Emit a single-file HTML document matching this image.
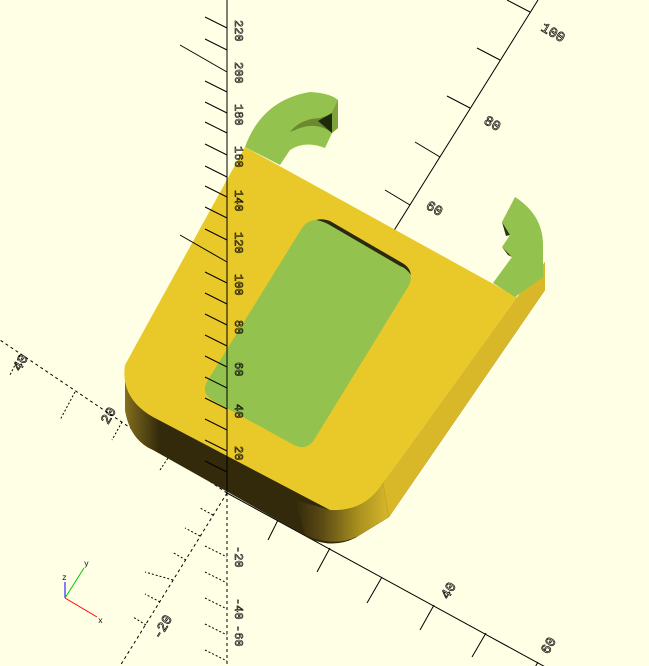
<!DOCTYPE html>
<html><head><style>
html,body{margin:0;padding:0;background:#ffffe5;}
svg{display:block;}
text{font-family:"Liberation Mono",monospace;}
</style></head><body>
<svg width="649" height="666" viewBox="0 0 649 666" xmlns="http://www.w3.org/2000/svg">
<defs>
<linearGradient id="fr" x1="295" y1="0" x2="385" y2="0" gradientUnits="userSpaceOnUse">
<stop offset="0" stop-color="#33290b"/><stop offset="0.3" stop-color="#5a4a14"/><stop offset="0.7" stop-color="#a8901f"/><stop offset="1" stop-color="#d2b22a"/>
</linearGradient>
<linearGradient id="fl" x1="122" y1="0" x2="160" y2="0" gradientUnits="userSpaceOnUse">
<stop offset="0" stop-color="#8a7420"/><stop offset="1" stop-color="#33290b"/>
</linearGradient>
</defs>
<rect width="649" height="666" fill="#ffffe5"/>
<g stroke="#000" stroke-width="1" fill="none">
<line x1="227" y1="493" x2="0" y2="340" stroke-dasharray="3,3"/>
<line x1="227" y1="493" x2="120" y2="666" stroke-dasharray="3,3"/>
<line x1="227" y1="493" x2="227" y2="666" stroke-dasharray="3,3"/>
<line x1="227" y1="493" x2="560" y2="675"/>
<line x1="230" y1="493" x2="538" y2="0"/>
<line x1="278" y1="520" x2="268" y2="540"/><line x1="330" y1="548" x2="317" y2="572"/>
<line x1="382" y1="577" x2="367" y2="603"/><line x1="434" y1="605" x2="420" y2="630"/>
<line x1="486" y1="633" x2="472" y2="657"/><line x1="538" y1="662" x2="528" y2="680"/>
<line x1="410" y1="205" x2="385" y2="190"/><line x1="440" y1="157" x2="415" y2="142"/>
<line x1="470" y1="108" x2="447" y2="96"/><line x1="500" y1="60" x2="477" y2="48"/>
<line x1="530" y1="12" x2="507" y2="0"/>
<g stroke-dasharray="2,2">
<line x1="170" y1="455" x2="160" y2="470"/><line x1="122" y1="422" x2="112" y2="440"/>
<line x1="75" y1="392" x2="60" y2="420"/><line x1="20" y1="355" x2="10" y2="375"/>
<line x1="213" y1="515" x2="200" y2="508"/><line x1="200" y1="536" x2="185" y2="528"/>
<line x1="186" y1="560" x2="172" y2="552"/><line x1="173" y1="580" x2="145" y2="572"/>
<line x1="160" y1="602" x2="145" y2="594"/><line x1="146" y1="625" x2="133" y2="617"/>
<line x1="205" y1="546" x2="227" y2="557"/><line x1="205" y1="572" x2="227" y2="583"/>
<line x1="205" y1="598" x2="227" y2="609"/><line x1="205" y1="624" x2="227" y2="635"/>
<line x1="205" y1="650" x2="227" y2="661"/>
</g>
</g>
<g font-size="14" fill="none" stroke="#000" stroke-width="0.7">
<text transform="translate(345,540) rotate(-60)">20</text>
<text transform="translate(448,600) rotate(-60)">40</text>
<text transform="translate(548,655) rotate(-60)">60</text>
<text transform="translate(425,208) rotate(30)">60</text>
<text transform="translate(483,123) rotate(30)">80</text>
<text transform="translate(540,30) rotate(30)">100</text>
<text transform="translate(20,372) rotate(-60)">40</text>
<text transform="translate(108,425) rotate(-60)">20</text>
<text transform="translate(160,640) rotate(-60)">-20</text>
</g>
<!-- block side faces -->
<path d="M125,365 L125,410 Q130,440 153,450 L313,540 Q335,548 355,538 L389,517 L545,290 L545,262 L383,483 Z" fill="#33290b"/>
<path d="M125,365 L125,410 Q130,440 153,450 L160,452 L160,400 Z" fill="url(#fl)"/>
<path d="M295,500 L305,535 Q335,548 358,536 L389,517 L383,483 Q365,512 330,510 Z" fill="url(#fr)"/>
<path d="M383,483 L517,297 L545,262 L545,290 L389,517 Z" fill="#d8b828"/>
<!-- top face -->
<path d="M245,147 L517,297 L383,483 Q365,512 330,510 L153,417 Q120,398 125,365 L137,343 Z" fill="#e9c92a"/>
<!-- window -->
<path d="M328,222 L402,265 Q416,274 408,287 L314,440 Q306,451 294,445 L212,400 Q200,392 208,380 L302,228 Q310,216 328,222 Z" fill="#93c24e"/>
<path d="M316,220 Q322,218 330,221 L404,264 Q410,268 411,275 Q406,268 400,266 L328,224 Q322,221 316,220 Z" fill="#2a2a10"/>
<!-- left hook -->
<path d="M245,147 Q262,100 310,92 Q330,93 338,100 L338,128 L332,133 L325,148 Q305,140 290,150 L280,165 Z" fill="#93c24e"/>
<path d="M338,100 L338,128 L332,133 L332,112 Z" fill="#7ea33c"/>
<path d="M290,132 Q300,119 320,118 L332,114 L332,133 Q318,122 300,128 Z" fill="#6b8a30"/>
<path d="M318,121 L332,113 L332,133 Z" fill="#1f2a0a"/>
<!-- right hook -->
<path d="M515,197 Q543,215 543,245 L543,277 L515,297 L493,283 L512,257 L502,247 L510,235 L502,222 Z" fill="#93c24e"/>
<path d="M502,222 L510,235 L506,236 Z M502,247 L512,257 L508,255 Z" fill="#2a3510"/>
<!-- z axis over block -->
<g stroke="#000" stroke-width="1" fill="none">
<line x1="227" y1="0" x2="227" y2="493"/>
<line x1="205" y1="17" x2="227" y2="28"/><line x1="205" y1="39" x2="227" y2="50"/>
<line x1="180" y1="45" x2="227" y2="72"/><line x1="205" y1="81" x2="227" y2="92"/>
<line x1="205" y1="102" x2="227" y2="113"/><line x1="205" y1="122" x2="227" y2="133"/>
<line x1="205" y1="144" x2="227" y2="155"/><line x1="205" y1="166" x2="227" y2="177"/>
<line x1="205" y1="186" x2="227" y2="197"/><line x1="205" y1="207" x2="227" y2="218"/>
<line x1="205" y1="229" x2="227" y2="240"/><line x1="180" y1="235" x2="227" y2="262"/>
<line x1="205" y1="272" x2="227" y2="283"/><line x1="205" y1="293" x2="227" y2="304"/>
<line x1="205" y1="314" x2="227" y2="325"/><line x1="205" y1="335" x2="227" y2="346"/>
<line x1="205" y1="356" x2="227" y2="367"/><line x1="205" y1="377" x2="227" y2="388"/>
<line x1="205" y1="398" x2="227" y2="409"/><line x1="205" y1="419" x2="227" y2="430"/>
<line x1="205" y1="440" x2="227" y2="451"/><line x1="205" y1="461" x2="227" y2="472"/>
</g>
<g font-size="12" fill="none" stroke="#000" stroke-width="0.6">
<text transform="translate(235,20) rotate(90)">220</text>
<text transform="translate(235,62) rotate(90)">200</text>
<text transform="translate(235,104) rotate(90)">180</text>
<text transform="translate(235,146) rotate(90)">160</text>
<text transform="translate(235,190) rotate(90)">140</text>
<text transform="translate(235,232) rotate(90)">120</text>
<text transform="translate(235,274) rotate(90)">100</text>
<text transform="translate(235,320) rotate(90)">80</text>
<text transform="translate(235,362) rotate(90)">60</text>
<text transform="translate(235,404) rotate(90)">40</text>
<text transform="translate(235,446) rotate(90)">20</text>
<text transform="translate(235,546) rotate(90)">-20</text>
<text transform="translate(235,598) rotate(90)">-40</text>
<text transform="translate(235,625) rotate(90)">-60</text>
</g>
<line x1="65" y1="598" x2="65" y2="582" stroke="#0000ff"/>
<line x1="65" y1="598" x2="84" y2="568" stroke="#00cc00"/>
<line x1="65" y1="598" x2="97" y2="617" stroke="#ff0000"/>
<text x="62" y="580" font-size="8" fill="#000">z</text>
<text x="84" y="566" font-size="8" fill="#000">y</text>
<text x="98" y="623" font-size="8" fill="#000">x</text>
</svg>
</body></html>
